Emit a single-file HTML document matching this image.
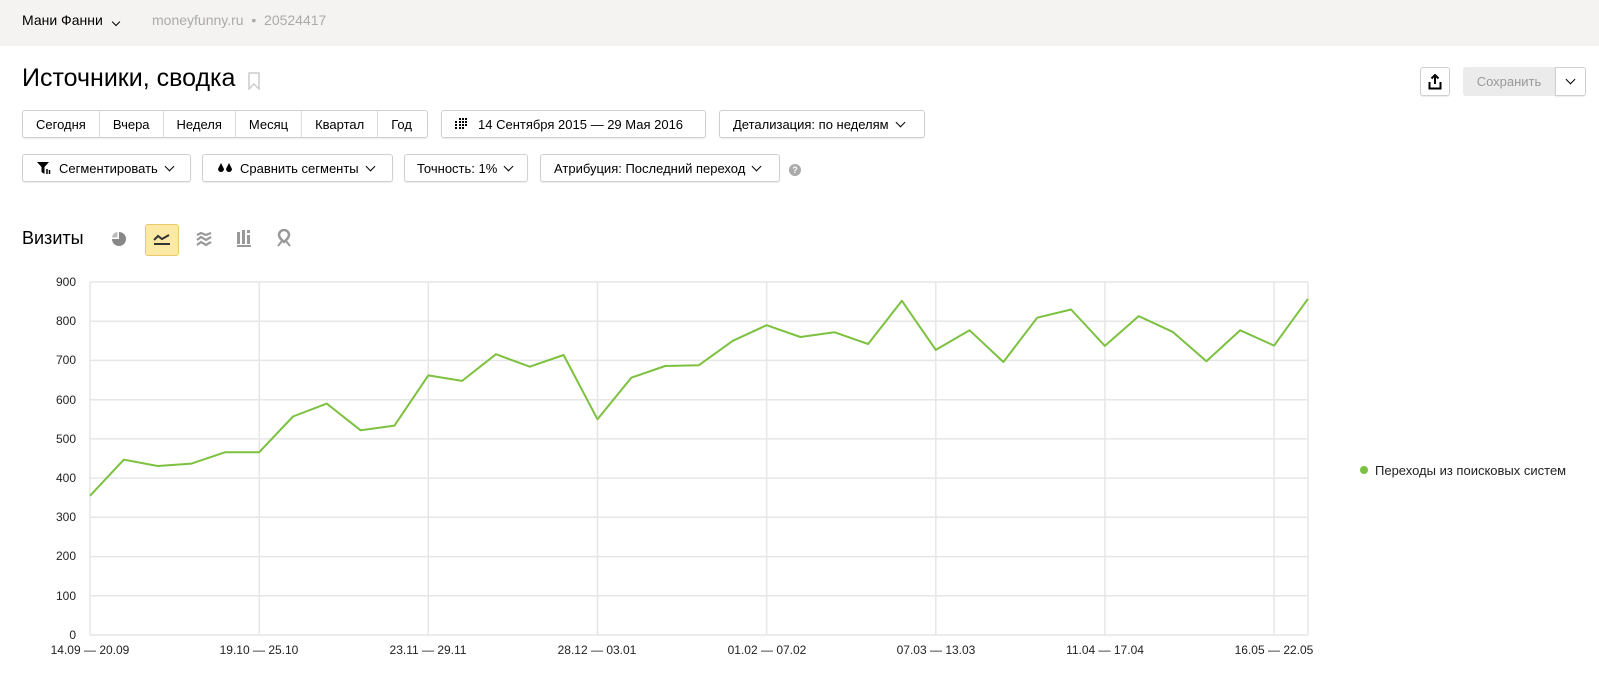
<!DOCTYPE html>
<html><head><meta charset="utf-8"><style>
*{box-sizing:border-box;margin:0;padding:0}
body{width:1599px;height:691px;background:#fff;font-family:"Liberation Sans",Arial,sans-serif;color:#000;position:relative;overflow:hidden;font-size:13px}
.hdr{position:absolute;left:0;top:0;width:1599px;height:46px;background:#f4f3f1}
.abs{position:absolute;white-space:nowrap}
.btn{position:absolute;height:28px;border:1px solid #d0d0d0;border-radius:3px;background:#fff;display:flex;align-items:center;font-size:13px;box-shadow:0 1px 1px rgba(0,0,0,.08)}
.seg{display:flex;height:100%;align-items:center;padding:0 13px;border-right:1px solid #ddd}
.seg:last-child{border-right:none}
.chev{display:inline-block;width:7px;height:7px;border-right:1.5px solid #000;border-bottom:1.5px solid #000;transform:rotate(45deg);margin-left:8px;margin-top:-4px}
</style></head><body>
<div class="hdr"></div>
<div class="abs" style="left:22px;top:12px;font-size:14px">Мани Фанни <span class="chev" style="width:6px;height:6px;margin-left:6px"></span></div>
<div class="abs" style="left:152px;top:12px;font-size:14px;color:#aaa">moneyfunny.ru &nbsp;•&nbsp; 20524417</div>
<div class="abs" style="left:22px;top:64px;font-size:25px">Источники, сводка</div>
<svg class="abs" style="left:248px;top:72px" width="12" height="18"><path d="M1 1H11V17L6 12L1 17Z" fill="none" stroke="#ccc" stroke-width="1.5"/></svg>

<div class="btn" style="left:1420px;top:67px;width:30px;height:29px;justify-content:center">
<svg width="14" height="16"><path d="M7 1V10M3.5 4.5L7 1L10.5 4.5" stroke="#000" stroke-width="2" fill="none"/><path d="M1.5 8V14.5H12.5V8" stroke="#000" stroke-width="2" fill="none"/></svg></div>
<div class="abs" style="left:1463px;top:67px;width:92px;height:29px;background:#ebebeb;border-radius:3px 0 0 3px;color:#999;font-size:13px;line-height:29px;text-align:center">Сохранить</div>
<div class="btn" style="left:1555px;top:67px;width:31px;height:29px;justify-content:center;border-radius:0 3px 3px 0"><span class="chev" style="margin:-4px 0 0 0"></span></div>

<div class="btn" style="left:22px;top:110px;width:406px">
<div class="seg">Сегодня</div><div class="seg">Вчера</div><div class="seg">Неделя</div><div class="seg">Месяц</div><div class="seg">Квартал</div><div class="seg">Год</div></div>
<div class="btn" style="left:441px;top:110px;width:265px;padding-left:13px">
<svg width="14" height="12" style="margin-right:9px"><g fill="#000"><rect x="4" y="0" width="2" height="2"/><rect x="7" y="0" width="2" height="2"/><rect x="10" y="0" width="2" height="2"/><rect x="0" y="3" width="2" height="2"/><rect x="4" y="3" width="2" height="2"/><rect x="7" y="3" width="2" height="2"/><rect x="10" y="3" width="2" height="2"/><rect x="0" y="6" width="2" height="2"/><rect x="4" y="6" width="2" height="2"/><rect x="7" y="6" width="2" height="2"/><rect x="10" y="6" width="2" height="2"/><rect x="0" y="9" width="2" height="2"/><rect x="4" y="9" width="2" height="2"/><rect x="7" y="9" width="2" height="2"/></g></svg>14 Сентября 2015 — 29 Мая 2016</div>
<div class="btn" style="left:719px;top:110px;width:206px;padding-left:13px">Детализация: по неделям<span class="chev"></span></div>

<div class="btn" style="left:22px;top:154px;width:169px;padding-left:14px">
<svg width="14" height="12" style="margin-right:8px"><path d="M0 0H12L7.5 5V12L4.5 10V5Z" fill="#000"/><path d="M10 7V12M12.5 8V12" stroke="#000" stroke-width="1.5"/></svg>Сегментировать<span class="chev"></span></div>
<div class="btn" style="left:202px;top:154px;width:191px;padding-left:14px">
<svg width="16" height="12" style="margin-right:7px"><path d="M4 1L7 7A3 3 0 1 1 1 7Z" fill="#000"/><path d="M12 1L15 7A3 3 0 1 1 9 7Z" fill="#000"/></svg>Сравнить сегменты<span class="chev"></span></div>
<div class="btn" style="left:404px;top:154px;width:124px;padding-left:12px">Точность: 1%<span class="chev"></span></div>
<div class="btn" style="left:540px;top:154px;width:240px;padding-left:13px">Атрибуция: Последний переход<span class="chev"></span></div>
<div class="abs" style="left:789px;top:164px;width:12px;height:12px;border-radius:50%;background:#aaa;color:#fff;font-size:9px;line-height:12px;text-align:center;font-weight:bold">?</div>

<div class="abs" style="left:22px;top:228px;font-size:18px">Визиты</div>
<svg class="abs" style="left:112px;top:232px" width="14" height="14"><path d="M7 0A7 7 0 1 1 0 7H7Z" fill="#888"/><path d="M5.5 0A6 6 0 0 0 0 5.5H5.5Z" fill="#bbb"/></svg>
<div class="abs" style="left:145px;top:224px;width:34px;height:32px;background:#fde9a6;border:1px solid #e9c96a;border-radius:3px"></div>
<svg class="abs" style="left:153px;top:232px" width="18" height="14"><path d="M1 8L5 4L9 7L16 3" stroke="#333" stroke-width="2" fill="none"/><path d="M1 12H17" stroke="#333" stroke-width="2"/></svg>
<svg class="abs" style="left:196px;top:232px" width="16" height="15"><path d="M1 3L5 1L10 3L15 1M1 8L5 5L10 8L15 5M1 13L5 10L10 13L15 10" stroke="#999" stroke-width="2.2" fill="none"/></svg>
<svg class="abs" style="left:237px;top:230px" width="16" height="17"><g fill="#999"><rect x="0" y="2" width="3" height="12"/><rect x="5" y="0" width="3" height="14"/><rect x="10" y="0" width="3" height="3"/><rect x="10" y="5" width="3" height="9"/><rect x="0" y="15" width="14" height="2"/></g></svg>
<svg class="abs" style="left:277px;top:229px" width="14" height="18"><path d="M7 1A5 5 0 0 1 12 6C12 9 7 13 7 13C7 13 2 9 2 6A5 5 0 0 1 7 1Z" fill="none" stroke="#999" stroke-width="2.5"/><path d="M1 17L5 12M13 17L9 12" stroke="#999" stroke-width="2"/></svg>

<svg class="abs" style="left:0;top:0" width="1599" height="691" font-family="Liberation Sans, Arial, sans-serif" font-size="12">
<g stroke="#e6e6e6" stroke-width="1.5">
<line x1="90" x2="1308" y1="282" y2="282"/><line x1="90" x2="1308" y1="321.2" y2="321.2"/><line x1="90" x2="1308" y1="360.4" y2="360.4"/><line x1="90" x2="1308" y1="399.7" y2="399.7"/><line x1="90" x2="1308" y1="438.9" y2="438.9"/><line x1="90" x2="1308" y1="478.1" y2="478.1"/><line x1="90" x2="1308" y1="517.3" y2="517.3"/><line x1="90" x2="1308" y1="556.6" y2="556.6"/><line x1="90" x2="1308" y1="595.8" y2="595.8"/><line x1="90" x2="1308" y1="635" y2="635"/>
<line x1="90" x2="90" y1="282" y2="635"/><line x1="1308" x2="1308" y1="282" y2="635"/>
<line x1="259.2" x2="259.2" y1="282" y2="635"/><line x1="428.3" x2="428.3" y1="282" y2="635"/><line x1="597.5" x2="597.5" y1="282" y2="635"/><line x1="766.6" x2="766.6" y1="282" y2="635"/><line x1="935.8" x2="935.8" y1="282" y2="635"/><line x1="1104.9" x2="1104.9" y1="282" y2="635"/><line x1="1274.1" x2="1274.1" y1="282" y2="635"/>
</g>
<g text-anchor="end" fill="#222">
<text x="76" y="286">900</text><text x="76" y="325">800</text><text x="76" y="364">700</text><text x="76" y="404">600</text><text x="76" y="443">500</text><text x="76" y="482">400</text><text x="76" y="521">300</text><text x="76" y="560">200</text><text x="76" y="600">100</text><text x="76" y="639">0</text>
</g>
<g text-anchor="middle" fill="#222">
<text x="90" y="654">14.09 — 20.09</text><text x="259" y="654">19.10 — 25.10</text><text x="428" y="654">23.11 — 29.11</text><text x="597" y="654">28.12 — 03.01</text><text x="767" y="654">01.02 — 07.02</text><text x="936" y="654">07.03 — 13.03</text><text x="1105" y="654">11.04 — 17.04</text><text x="1274" y="654">16.05 — 22.05</text>
</g>
<polyline fill="none" stroke="#7cc13f" stroke-width="2" stroke-linejoin="round" points="90,495.8 123.8,459.7 157.7,466 191.5,463.6 225.3,452.2 259.2,452.2 293,416.5 326.8,403.6 360.6,430.3 394.5,425.6 428.3,375.4 462.1,380.9 496,354.2 529.8,366.7 563.6,355 597.5,419.3 631.3,377.7 665.1,366 698.9,365.2 732.8,340.8 766.6,325.2 800.4,337 834.3,332.2 868.1,344 901.9,300.8 935.8,349.9 969.6,330.3 1003.4,362 1037.2,317.7 1071.1,309.5 1104.9,345.9 1138.7,316.1 1172.6,331.8 1206.4,361.2 1240.2,330.3 1274.1,345.6 1307.9,298.9"/>
<circle cx="1364" cy="470" r="4" fill="#7cc13f"/>
<text x="1375" y="475" font-size="13" fill="#222">Переходы из поисковых систем</text>
</svg>
</body></html>
